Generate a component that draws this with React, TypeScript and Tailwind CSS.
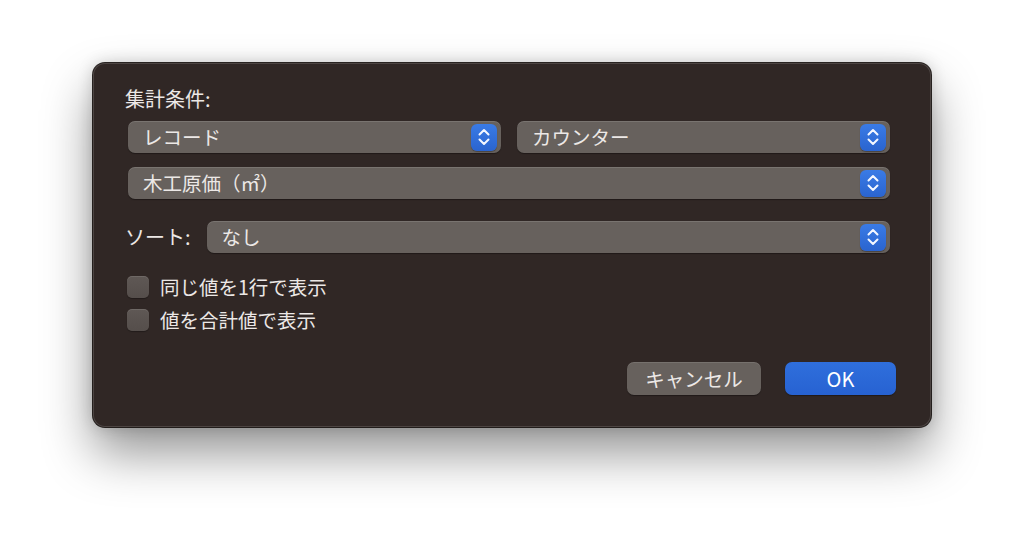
import React from "react";

const font = `"Noto Sans CJK JP", "Inter", sans-serif`;

function Stepper() {
  return (
    <div className="flex h-[27px] w-[26px] shrink-0 items-center justify-center rounded-[6px] bg-gradient-to-b from-[#3a7be6] to-[#2a64cf] shadow-[0_1px_1px_rgba(0,0,0,0.3)]">
      <svg width="14" height="20" viewBox="0 0 14 20" fill="none">
        <path d="M2.5 7.5 L7 3 L11.5 7.5" stroke="#f4f7ff" strokeWidth="2" strokeLinecap="round" strokeLinejoin="round" />
        <path d="M2.5 12.5 L7 17 L11.5 12.5" stroke="#f4f7ff" strokeWidth="2" strokeLinecap="round" strokeLinejoin="round" />
      </svg>
    </div>
  );
}

interface PopupProps {
  label: string;
  className?: string;
}

function Popup(props: PopupProps) {
  const { label, className } = props;
  return (
    <div
      className={`flex h-[32px] items-center justify-between rounded-[7px] bg-[#67615d] pl-[15px] pr-[4px] shadow-[inset_0_1px_0_rgba(255,255,255,0.12),0_1px_1px_rgba(0,0,0,0.35)] ${className ?? ""}`}
    >
      <span className="text-[19.5px] leading-none text-[#ece8e6]">{label}</span>
      <Stepper />
    </div>
  );
}

function Check(props: { label: string }) {
  return (
    <div className="flex h-[33px] items-center">
      <div className="h-[22px] w-[22px] rounded-[5px] bg-gradient-to-b from-[#5f5855] to-[#554e4b] shadow-[inset_0_1px_0_rgba(255,255,255,0.1),0_1px_1px_rgba(0,0,0,0.3)]" />
      <span className="ml-[11px] text-[19.5px] leading-none text-[#ece8e6]">{props.label}</span>
    </div>
  );
}

export default function App() {
  return (
    <div className="h-[550px] w-[1024px] bg-white pl-[93px] pt-[63px]" style={{ fontFamily: font }}>
      <div className="flex h-[364px] w-[838px] flex-col rounded-[12px] bg-[#302725] pb-[32px] pl-[35px] pr-[41px] pt-[23px] shadow-[0_0_0_1px_rgba(20,14,12,0.9),inset_0_0_0_1px_rgba(255,255,255,0.14),0_26px_50px_rgba(0,0,0,0.42),0_0_16px_rgba(0,0,0,0.18)]">
        <div className="-ml-[3px] text-[20px] leading-[26px] text-[#ece8e6]">集計条件:</div>

        <div className="mt-[9px] flex gap-[16px]">
          <Popup label="レコード" className="flex-1" />
          <Popup label="カウンター" className="flex-1" />
        </div>

        <Popup label="木工原価（㎡）" className="mt-[14px]" />

        <div className="mt-[22px] flex items-center gap-[16px]">
          <span className="-ml-[3px] text-[20px] leading-none text-[#ece8e6]">ソート:</span>
          <Popup label="なし" className="flex-1 pl-[14px]" />
        </div>

        <div className="mt-[17px] flex flex-col -ml-[1px]">
          <Check label="同じ値を1行で表示" />
          <Check label="値を合計値で表示" />
        </div>

        <div className="-mr-[6px] mt-auto flex justify-end gap-[24px]">
          <button className="h-[33px] w-[134px] rounded-[7px] bg-[#67615d] text-[19.5px] leading-none text-[#ece8e6] shadow-[inset_0_1px_0_rgba(255,255,255,0.1),0_1px_1px_rgba(0,0,0,0.35)]">
            キャンセル
          </button>
          <button className="h-[33px] w-[111px] rounded-[7px] bg-gradient-to-b from-[#2f6fdc] to-[#2762d2] text-[20px] leading-none text-white shadow-[0_1px_1px_rgba(0,0,0,0.35)]">
            OK
          </button>
        </div>
      </div>
    </div>
  );
}
